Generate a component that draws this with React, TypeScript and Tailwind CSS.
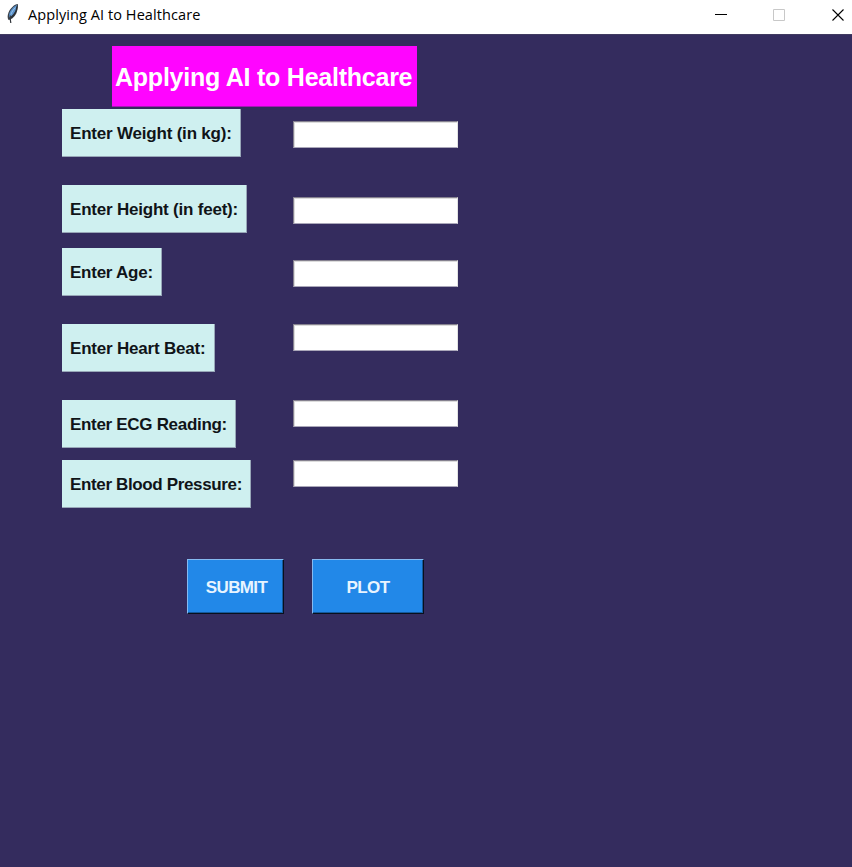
const fields = [
  { label: "Enter Weight (in kg):", row: "h-[76px]", box: "w-[179px] tracking-[-0.2px]", entry: "mt-[12px]" },
  { label: "Enter Height (in feet):", row: "h-[63px]", box: "w-[185px] tracking-[-0.21px]", entry: "mt-[12px]" },
  { label: "Enter Age:", row: "h-[76px]", box: "w-[100px] tracking-[-0.25px]", entry: "mt-[12px]" },
  { label: "Enter Heart Beat:", row: "h-[76px]", box: "w-[153px] tracking-[-0.2px]", entry: "" },
  { label: "Enter ECG Reading:", row: "h-[60px]", box: "w-[174px] tracking-[-0.31px]", entry: "" },
  { label: "Enter Blood Pressure:", row: "h-[98px]", box: "w-[189px] tracking-[-0.36px]", entry: "" },
];

function Feather() {
  return (
    <svg className="ml-[5px] shrink-0" width="16" height="24" viewBox="0 0 16 24">
      <path d="M12.8 4C9.5 4.2 5.5 8 3.5 12.5 2.3 15.5 2.4 18 3.5 20l1.3-.3c4-1.6 6.6-5 7.5-9.5.5-2.7 1-4.5.5-6.2Z" fill="#3a414a" />
      <path d="M12 5C9 6 5.6 9.5 4.2 14l-.2 3.5c3.6-1.8 6.4-5 7.3-9.3Z" fill="#5b93cc" />
      <path d="M12 6.5C11.8 11 9.5 15 6 17.8" fill="none" stroke="#2b3036" strokeWidth="1.3" />
      <path d="M5.4 15.5C4.7 17.5 5.4 19.5 5.8 23" fill="none" stroke="#34383d" strokeWidth="1.2" />
      <path d="M10.5 7.5C8.5 9.3 6.7 12 5.9 14.5" fill="none" stroke="#9cc5ea" strokeWidth="1" />
    </svg>
  );
}

function TitleBar() {
  return (
    <header className="flex h-[34px] items-start bg-white">
      <Feather />
      <span className="ml-[7px] mt-[5px] whitespace-nowrap font-['Open_Sans',sans-serif] text-[14.5px] font-normal leading-5 tracking-[0.08px] text-black">
        Applying AI to Healthcare
      </span>
      <svg className="ml-auto mt-2 shrink-0" width="140" height="16" viewBox="0 0 140 16" fill="none">
        <path d="M3 6.5h12" stroke="#000" />
        <path d="M61.5 1.5h11v11h-11z" stroke="#c8c8c8" />
        <path d="m120.5 1.5 11 11m0-11-11 11" stroke="#000" strokeWidth="1.1" />
      </svg>
    </header>
  );
}

export default function App() {
  return (
    <div className="flex h-[867px] w-[852px] flex-col overflow-hidden bg-[#342c5e] font-['Liberation_Sans',Arial,sans-serif] font-bold">
      <TitleBar />
      <main className="flex flex-1 flex-col border-t border-[#413b61] pt-[11px]">
        <h1 className="ml-[112px] flex h-[61px] w-[305px] items-center whitespace-nowrap border-b border-[#a716b5] bg-[#ff05ff] pl-[3px] pt-[2px] text-[25px] leading-none tracking-[-0.24px] text-white">
          Applying AI to Healthcare
        </h1>
        <div className="mt-[2px] pl-[62px]">
          {fields.map((f) => (
            <div key={f.label} className={`flex items-start ${f.row}`}>
              <div className="w-[231px] shrink-0">
                <label className={`flex h-[48px] items-center whitespace-nowrap border-b border-r border-[#98a7b8] bg-[#cff0f0] pl-2 pt-[2px] text-[17px] leading-none text-[#101418] ${f.box}`}>
                  {f.label}
                </label>
              </div>
              <input
                aria-label={f.label}
                className={`h-[27px] w-[165px] border border-b-[#aaa7b9] border-l-[#85818f] border-r-[#e3e3e3] border-t-[#85818f] bg-white shadow-[inset_1px_1px_0_#dcdcdc] outline-none ${f.entry}`}
              />
            </div>
          ))}
        </div>
        <div className="flex gap-[27px] pl-[187px] pt-px">
          <button className="h-[55px] w-[97px] border border-b-[#08101c] border-l-[#85baf0] border-r-[#08101c] border-t-[#85baf0] bg-[#2288e8] pl-[2px] pt-px text-[17px] leading-none tracking-[-0.65px] text-[#e8f4ff] shadow-[inset_-1px_-1px_0_#15599c]">
            SUBMIT
          </button>
          <button className="ml-px h-[55px] w-[112px] border border-b-[#08101c] border-l-[#85baf0] border-r-[#08101c] border-t-[#85baf0] bg-[#2288e8] pt-px text-[17px] leading-none tracking-[-0.6px] text-[#e8f4ff] shadow-[inset_-1px_-1px_0_#15599c]">
            PLOT
          </button>
        </div>
      </main>
    </div>
  );
}
